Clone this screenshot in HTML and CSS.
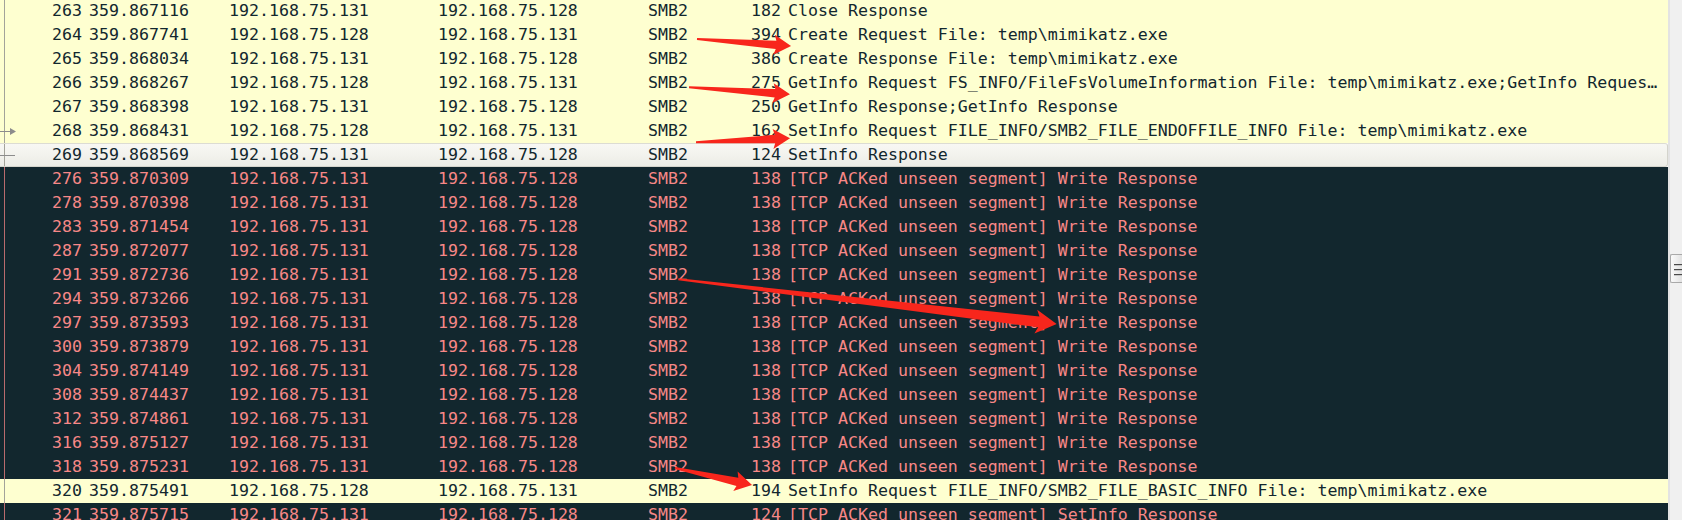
FILE: index.html
```html
<!DOCTYPE html>
<html>
<head>
<meta charset="utf-8">
<link rel="stylesheet" href="styles.css">
</head>
<body>
<div class="screen">
  <div class="list">
    <div class="row smb"><span class="gut"></span><span class="num">263</span><span class="c">359.867116</span><span class="c">192.168.75.131</span><span class="c">192.168.75.128</span><span class="c">SMB2</span><span class="num">182</span><span class="c info">Close Response</span></div>
    <div class="row smb"><span class="gut"></span><span class="num">264</span><span class="c">359.867741</span><span class="c">192.168.75.128</span><span class="c">192.168.75.131</span><span class="c">SMB2</span><span class="num">394</span><span class="c info">Create Request File: temp\mimikatz.exe</span></div>
    <div class="row smb"><span class="gut"></span><span class="num">265</span><span class="c">359.868034</span><span class="c">192.168.75.131</span><span class="c">192.168.75.128</span><span class="c">SMB2</span><span class="num">386</span><span class="c info">Create Response File: temp\mimikatz.exe</span></div>
    <div class="row smb"><span class="gut"></span><span class="num">266</span><span class="c">359.868267</span><span class="c">192.168.75.128</span><span class="c">192.168.75.131</span><span class="c">SMB2</span><span class="num">275</span><span class="c info">GetInfo Request FS_INFO/FileFsVolumeInformation File: temp\mimikatz.exe;GetInfo Reques…</span></div>
    <div class="row smb"><span class="gut"></span><span class="num">267</span><span class="c">359.868398</span><span class="c">192.168.75.131</span><span class="c">192.168.75.128</span><span class="c">SMB2</span><span class="num">250</span><span class="c info">GetInfo Response;GetInfo Response</span></div>
    <div class="row smb"><span class="gut"><svg width="20" height="24" viewBox="0 0 20 24"><line x1="0" y1="12.5" x2="11" y2="12.5" stroke="#8c8c8c" stroke-width="1"/><polygon points="10,9 16,12.5 10,16" fill="#8c8c8c"/></svg></span><span class="num">268</span><span class="c">359.868431</span><span class="c">192.168.75.128</span><span class="c">192.168.75.131</span><span class="c">SMB2</span><span class="num">162</span><span class="c info">SetInfo Request FILE_INFO/SMB2_FILE_ENDOFFILE_INFO File: temp\mimikatz.exe</span></div>
    <div class="row hl"><span class="gut"><svg width="20" height="22" viewBox="0 0 20 22"><line x1="0" y1="11.5" x2="15" y2="11.5" stroke="#8c8c8c" stroke-width="1"/></svg></span><span class="num">269</span><span class="c">359.868569</span><span class="c">192.168.75.131</span><span class="c">192.168.75.128</span><span class="c">SMB2</span><span class="num">124</span><span class="c info">SetInfo Response</span></div>
    <div class="row bad"><span class="gut"></span><span class="num">276</span><span class="c">359.870309</span><span class="c">192.168.75.131</span><span class="c">192.168.75.128</span><span class="c">SMB2</span><span class="num">138</span><span class="c info">[TCP ACKed unseen segment] Write Response</span></div>
    <div class="row bad"><span class="gut"></span><span class="num">278</span><span class="c">359.870398</span><span class="c">192.168.75.131</span><span class="c">192.168.75.128</span><span class="c">SMB2</span><span class="num">138</span><span class="c info">[TCP ACKed unseen segment] Write Response</span></div>
    <div class="row bad"><span class="gut"></span><span class="num">283</span><span class="c">359.871454</span><span class="c">192.168.75.131</span><span class="c">192.168.75.128</span><span class="c">SMB2</span><span class="num">138</span><span class="c info">[TCP ACKed unseen segment] Write Response</span></div>
    <div class="row bad"><span class="gut"></span><span class="num">287</span><span class="c">359.872077</span><span class="c">192.168.75.131</span><span class="c">192.168.75.128</span><span class="c">SMB2</span><span class="num">138</span><span class="c info">[TCP ACKed unseen segment] Write Response</span></div>
    <div class="row bad"><span class="gut"></span><span class="num">291</span><span class="c">359.872736</span><span class="c">192.168.75.131</span><span class="c">192.168.75.128</span><span class="c">SMB2</span><span class="num">138</span><span class="c info">[TCP ACKed unseen segment] Write Response</span></div>
    <div class="row bad"><span class="gut"></span><span class="num">294</span><span class="c">359.873266</span><span class="c">192.168.75.131</span><span class="c">192.168.75.128</span><span class="c">SMB2</span><span class="num">138</span><span class="c info">[TCP ACKed unseen segment] Write Response</span></div>
    <div class="row bad"><span class="gut"></span><span class="num">297</span><span class="c">359.873593</span><span class="c">192.168.75.131</span><span class="c">192.168.75.128</span><span class="c">SMB2</span><span class="num">138</span><span class="c info">[TCP ACKed unseen segment] Write Response</span></div>
    <div class="row bad"><span class="gut"></span><span class="num">300</span><span class="c">359.873879</span><span class="c">192.168.75.131</span><span class="c">192.168.75.128</span><span class="c">SMB2</span><span class="num">138</span><span class="c info">[TCP ACKed unseen segment] Write Response</span></div>
    <div class="row bad"><span class="gut"></span><span class="num">304</span><span class="c">359.874149</span><span class="c">192.168.75.131</span><span class="c">192.168.75.128</span><span class="c">SMB2</span><span class="num">138</span><span class="c info">[TCP ACKed unseen segment] Write Response</span></div>
    <div class="row bad"><span class="gut"></span><span class="num">308</span><span class="c">359.874437</span><span class="c">192.168.75.131</span><span class="c">192.168.75.128</span><span class="c">SMB2</span><span class="num">138</span><span class="c info">[TCP ACKed unseen segment] Write Response</span></div>
    <div class="row bad"><span class="gut"></span><span class="num">312</span><span class="c">359.874861</span><span class="c">192.168.75.131</span><span class="c">192.168.75.128</span><span class="c">SMB2</span><span class="num">138</span><span class="c info">[TCP ACKed unseen segment] Write Response</span></div>
    <div class="row bad"><span class="gut"></span><span class="num">316</span><span class="c">359.875127</span><span class="c">192.168.75.131</span><span class="c">192.168.75.128</span><span class="c">SMB2</span><span class="num">138</span><span class="c info">[TCP ACKed unseen segment] Write Response</span></div>
    <div class="row bad"><span class="gut"></span><span class="num">318</span><span class="c">359.875231</span><span class="c">192.168.75.131</span><span class="c">192.168.75.128</span><span class="c">SMB2</span><span class="num">138</span><span class="c info">[TCP ACKed unseen segment] Write Response</span></div>
    <div class="row smb"><span class="gut"></span><span class="num">320</span><span class="c">359.875491</span><span class="c">192.168.75.128</span><span class="c">192.168.75.131</span><span class="c">SMB2</span><span class="num">194</span><span class="c info">SetInfo Request FILE_INFO/SMB2_FILE_BASIC_INFO File: temp\mimikatz.exe</span></div>
    <div class="row bad"><span class="gut"></span><span class="num">321</span><span class="c">359.875715</span><span class="c">192.168.75.131</span><span class="c">192.168.75.128</span><span class="c">SMB2</span><span class="num">124</span><span class="c info">[TCP ACKed unseen segment] SetInfo Response</span></div>
  </div>
  <div class="vscroll"><div class="thumb"><i></i><i></i><i></i></div></div>
  <svg class="marks" width="1682" height="520" viewBox="0 0 1682 520">
    <g fill="#f8261c">
      <polygon transform="translate(697,39) rotate(4.26)" points="0,-1 79.3,-4.2 77.3,-10 94.3,0 77.3,10 79.3,4.2 0,1"/>
      <polygon transform="translate(689,87.3) rotate(3.96)" points="0,-1 86.2,-4.2 84.2,-10 101.2,0 84.2,10 86.2,4.2 0,1"/>
      <polygon transform="translate(696,142.3) rotate(-2.44)" points="0,-1 79.1,-4.2 77.1,-10 94.1,0 77.1,10 79.1,4.2 0,1"/>
      <polygon transform="translate(678.3,279.3) rotate(6.74)" points="0,-1 363,-5.5 360,-12 381,0 360,12 363,5.5 0,1"/>
      <polygon transform="translate(675,468) rotate(12.45)" points="0,-1 63.9,-4.2 61.9,-10 78.9,0 61.9,10 63.9,4.2 0,1"/>
    </g>
  </svg>
</div>
</body>
</html>
```
FILE: styles.css
```css
html, body {
  margin: 0;
  padding: 0;
  background: #ffffff;
}
body {
  width: 1682px;
  height: 520px;
  overflow: hidden;
  font-family: "DejaVu Sans Mono", "Liberation Mono", monospace;
  font-size: 16.6px;
}
.screen {
  position: relative;
  display: flex;
  width: 1682px;
  height: 520px;
  overflow: hidden;
}
.list {
  width: 1668px;
  margin-top: -1px;
  display: flex;
  flex-direction: column;
}
.row {
  display: grid;
  grid-template-columns: 20px 66px 140px 209px 210px 90px 50px 1fr;
  height: 24px;
  line-height: 24px;
  box-sizing: border-box;
  white-space: nowrap;
}
.row > span {
  overflow: hidden;
  white-space: nowrap;
}
.c {
  padding-left: 3px;
}
.num {
  text-align: right;
  padding-right: 4px;
}
.info {
  overflow: hidden;
}
.gut {
  display: block;
  background: linear-gradient(to right, transparent 4px, var(--gl) 4px, var(--gl) 5px, transparent 5px);
}
.gut svg {
  display: block;
}
.smb {
  background: #feffd0;
  color: #12272e;
  --gl: #a3a39a;
}
.bad {
  background: #12272e;
  color: #f78787;
  --gl: #b96a6d;
}
.hl {
  background: linear-gradient(#f8f8f4, #ecece6);
  color: #12272e;
  border-top: 1px solid #dcdcd3;
  border-bottom: 1px solid #d4d4cc;
  border-right: 1px solid #d4d4cc;
  border-radius: 0 3px 3px 0;
  line-height: 22px;
  --gl: #a3a39a;
}
.vscroll {
  width: 14px;
  background: #f0f0f0;
  border-left: 2px solid #e3e3e3;
  box-sizing: border-box;
  padding-top: 254px;
}
.thumb {
  height: 29px;
  box-sizing: border-box;
  border: 1px solid #a9a9a9;
  border-right: none;
  border-radius: 2px 0 0 2px;
  background: linear-gradient(to right, #fafafa, #e2e2e2);
  display: flex;
  flex-direction: column;
  gap: 3px;
  padding: 9px 0 0 3px;
}
.thumb i {
  display: block;
  height: 1px;
  background: #4a4a4a;
  border-bottom: 1px solid #c8c8c8;
}
.marks {
  position: absolute;
  left: 0;
  top: 0;
  pointer-events: none;
}
```
